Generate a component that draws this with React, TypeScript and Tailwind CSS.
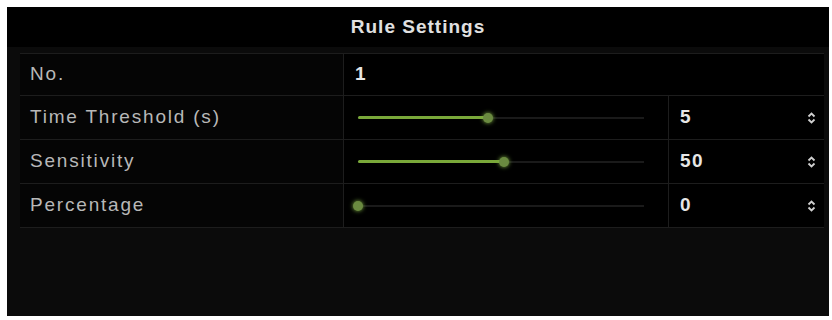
const rows = [
  { label: 'Time Threshold (s)', value: '5', fill: 130 },
  { label: 'Sensitivity', value: '50', fill: 146 },
  { label: 'Percentage', value: '0', fill: 0 },
]

function Slider({ fill }: { fill: number }) {
  return (
    <div className="relative h-[10px] w-[286px]">
      <div className="absolute left-0 right-0 top-[4px] h-[2px] bg-[#1a1a1a]" />
      <div
        className="absolute left-0 top-[3px] h-[3px] rounded-full bg-[#7aa83a]"
        style={{ width: fill }}
      />
      <div
        className="absolute top-0 h-[10px] w-[10px] -translate-x-1/2 rounded-full bg-[#6a8a40] shadow-[0_0_4px_#7fae44]"
        style={{ left: fill }}
      />
    </div>
  )
}

function UpDown() {
  return (
    <svg width="9" height="14" viewBox="0 0 9 14" fill="none" stroke="#d0d0d0" strokeWidth="1.8">
      <path d="M1.5 5.5 L4.5 2.5 L7.5 5.5" />
      <path d="M1.5 8.5 L4.5 11.5 L7.5 8.5" />
    </svg>
  )
}

export default function App() {
  return (
    <div className="h-[320px] w-[832px] bg-white pt-[7px] pl-[7px]" style={{ fontFamily: '"Liberation Sans", Arial, sans-serif' }}>
      <div className="flex h-[309px] w-[822px] flex-col bg-[#0b0b0b]">
        <div className="flex h-[40px] items-center justify-center bg-black pt-[1px] text-[19px] font-bold tracking-[1px] text-[#e0e0e0]">
          Rule Settings
        </div>
        <div className="pl-[13px] pr-[5px] pt-[6px]">
          <div className="border-t border-[#1d1d1d]">
            <div className="flex h-[42px] border-b border-[#1d1d1d]">
              <div className="flex w-[324px] items-center border-r border-[#1d1d1d] bg-[#050505] pl-[10px] text-[19px] tracking-[1.8px] text-[#b8b8b8]">
                No.
              </div>
              <div className="flex flex-1 items-center bg-black pl-[11px] text-[19px] font-bold text-[#e6e6e6]">
                1
              </div>
            </div>
            {rows.map((r) => (
              <div key={r.label} className="flex h-[44px] border-b border-[#1d1d1d]">
                <div className="flex w-[324px] items-center border-r border-[#1d1d1d] bg-[#050505] pl-[10px] text-[19px] tracking-[1.8px] text-[#b8b8b8]">
                  {r.label}
                </div>
                <div className="flex w-[325px] items-center border-r border-[#1d1d1d] bg-black pl-[14px]">
                  <Slider fill={r.fill} />
                </div>
                <div className="flex flex-1 items-center justify-between bg-black pl-[11px] pr-[8px] text-[19px] font-bold tracking-[1.5px] text-[#e6e6e6]">
                  <span>{r.value}</span>
                  <UpDown />
                </div>
              </div>
            ))}
          </div>
        </div>
      </div>
    </div>
  )
}
